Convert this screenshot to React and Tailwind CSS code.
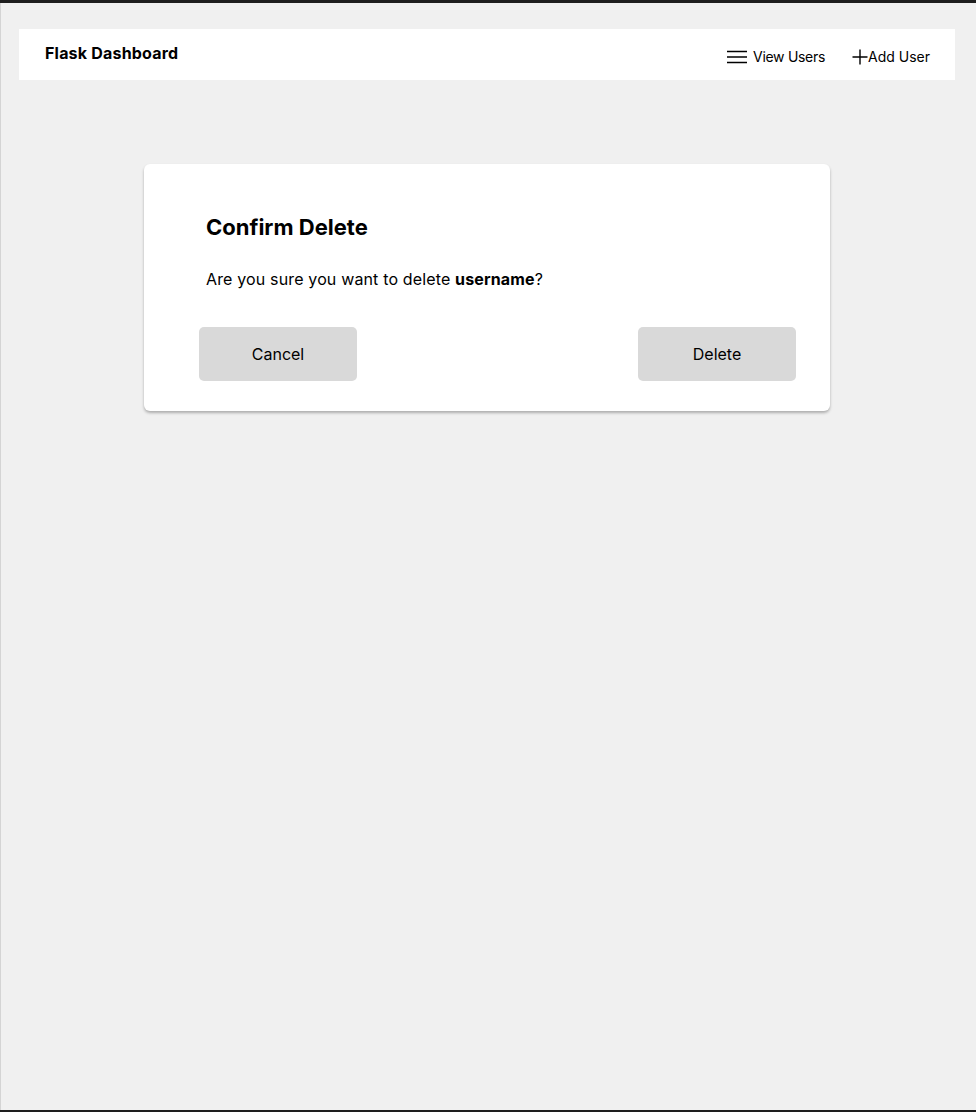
import React from "react";

export default function App() {
  return (
    <div
      className="w-[976px] h-[1112px] bg-[#1e1e1e] pt-[3px] pb-[2px]"
      style={{ fontFamily: "Inter, 'Noto Sans', sans-serif" }}
    >
      <div className="h-full bg-[#f0f0f0] border-l border-[#d4d4d4] pt-[26px] pl-[18px] pr-[21px]">
        <header className="h-[51px] bg-white flex items-start justify-between pl-[26px] pr-[25px]">
          <div className="pt-[14px] text-[16px] font-bold text-black leading-[20px] tracking-[0.2px]">
            Flask Dashboard
          </div>
          <nav className="flex items-center pt-[19px] text-[14px] text-black leading-[18px]">
            <a className="flex items-center gap-[6px]">
              <svg width="20" height="14" viewBox="0 0 20 14" className="block">
                <path d="M0 1.5H20M0 7H20M0 12.5H20" stroke="#000" strokeWidth="1.3" />
              </svg>
              <span className="tracking-[-0.3px]">View Users</span>
            </a>
            <a className="flex items-center ml-[27px]">
              <svg width="16" height="16" viewBox="0 0 16 16" className="block">
                <path d="M8 0.5V15.5M0.5 8H15.5" stroke="#000" strokeWidth="1.4" />
              </svg>
              <span>Add User</span>
            </a>
          </nav>
        </header>

        <div className="ml-[125px] mt-[84px] w-[686px] h-[247px] bg-white rounded-[6px] shadow-[0_2px_3px_rgba(0,0,0,0.28)] pl-[55px] pr-[34px] pt-[49px]">
          <h2 className="ml-[7px] text-[22px] font-bold text-black leading-[28px]">Confirm Delete</h2>
          <p className="ml-[7px] mt-[27px] text-[16px] text-black leading-[22px] tracking-[0.15px]">
            Are you sure you want to delete <b className="font-bold">username</b>?
          </p>
          <div className="mt-[37px] flex justify-between">
            <button className="w-[158px] h-[54px] bg-[#d9d9d9] rounded-[5px] text-[16px] text-black">
              Cancel
            </button>
            <button className="w-[158px] h-[54px] bg-[#d9d9d9] rounded-[5px] text-[16px] text-black">
              Delete
            </button>
          </div>
        </div>
      </div>
    </div>
  );
}
